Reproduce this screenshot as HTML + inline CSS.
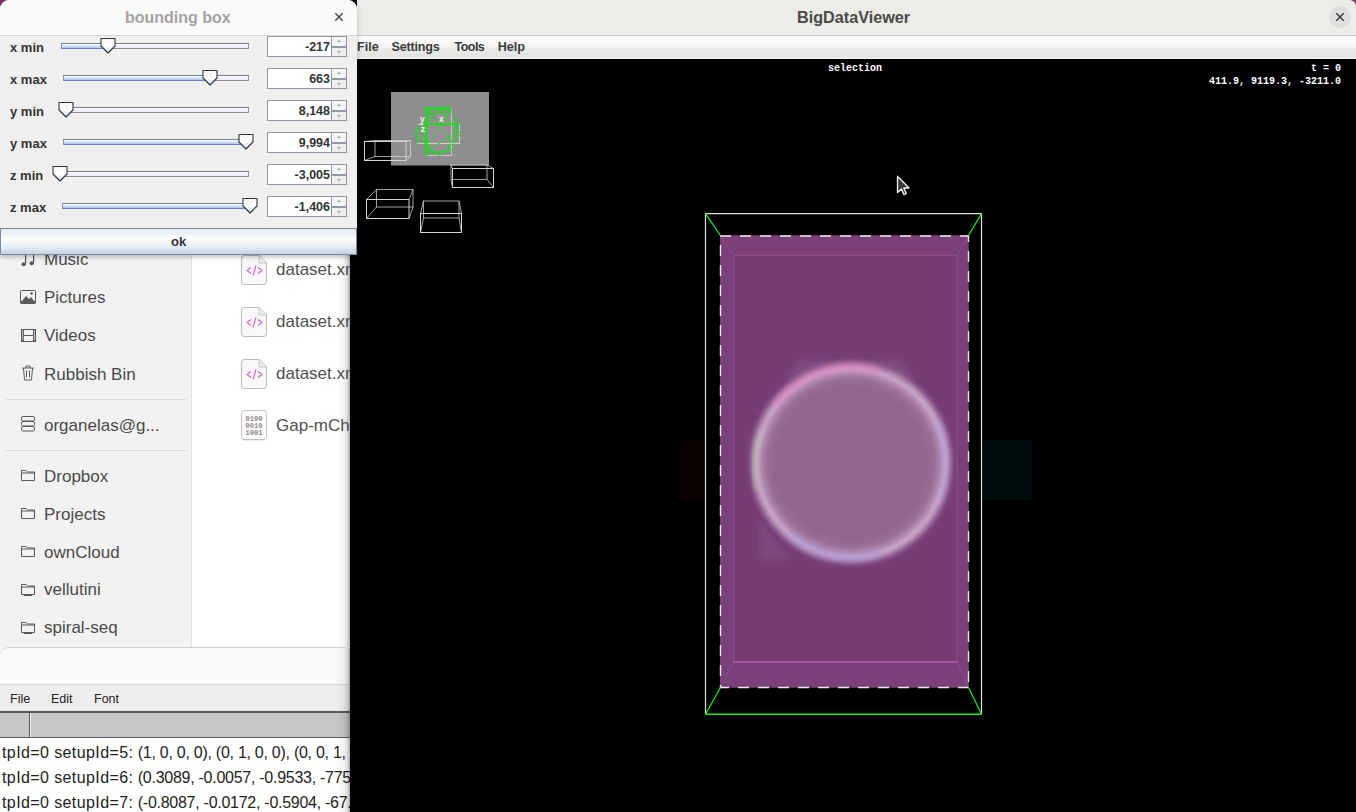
<!DOCTYPE html><html><head><meta charset="utf-8"><style>
*{margin:0;padding:0;box-sizing:border-box}
html,body{width:1356px;height:812px;overflow:hidden;background:#000;font-family:"Liberation Sans",sans-serif}
.a{position:absolute}
svg{position:absolute;overflow:visible}
.si{position:absolute;left:44px;font-size:17px;color:#4a4a4a;white-space:nowrap;line-height:20px}
.fi{position:absolute;left:276px;font-size:17px;color:#505050;white-space:nowrap;line-height:20px}
.mi{position:absolute;font-size:12.6px;font-weight:bold;color:#3b3b3b;line-height:16px;white-space:nowrap}
.mono{font-family:"Liberation Mono",monospace;font-weight:bold;color:#fff;font-size:10px;position:absolute;white-space:nowrap;line-height:12px}
.lab{position:absolute;left:10px;font-size:13px;font-weight:bold;color:#333;white-space:nowrap;line-height:16px}
.fld{position:absolute;left:267px;width:65px;height:21px;background:#fff;border:1px solid #8f9aa6;border-right:none;font-size:12.5px;font-weight:bold;color:#333;text-align:right;padding-right:2px;line-height:20.5px}
.sp{position:absolute;left:331px;width:16px;height:21px;border:1px solid #8f9aa6;background:linear-gradient(#f7f7f7,#ececec)}
.sp i{position:absolute;left:0;top:9px;width:14px;height:2px;background:#8f9aa6}
.sp b{position:absolute;left:5px;width:0;height:0;border-left:2.5px solid transparent;border-right:2.5px solid transparent}
.log{position:absolute;left:2px;font-size:16px;color:#222;white-space:nowrap;line-height:20px}
</style></head><body>
<div class="a" style="left:0;top:0;width:1356px;height:812px;background:#000"></div>
<div class="a" style="left:0;top:0;width:40px;height:40px;background:#7d2c6b"></div>
<div class="a" style="left:1316px;top:0;width:40px;height:40px;background:#7d2c6b"></div>
<div class="a" style="left:0;top:20px;width:350px;height:640px;background:#fff;overflow:hidden"><div class="a" style="left:0;top:-20px;width:350px;height:660px">
<div class="a" style="left:0;top:0;width:192px;height:660px;background:#f2f2f2;border-right:1px solid #e2e2e2"></div>
<div class="a" style="left:336px;top:0;width:14px;height:660px;background:linear-gradient(90deg,rgba(0,0,0,0),rgba(0,0,0,0.03) 45%,rgba(0,0,0,0.09) 70%,rgba(0,0,0,0.2) 88%,rgba(0,0,0,0.35))"></div>
<div class="si" style="top:250.2px">Music</div>
<div class="si" style="top:288.3px">Pictures</div>
<div class="si" style="top:325.8px">Videos</div>
<div class="si" style="top:364.5px">Rubbish Bin</div>
<div class="si" style="top:415.8px">organelas@g...</div>
<div class="si" style="top:466.8px">Dropbox</div>
<div class="si" style="top:504.8px">Projects</div>
<div class="si" style="top:542.5px">ownCloud</div>
<div class="si" style="top:580.2px">vellutini</div>
<div class="si" style="top:618.1px">spiral-seq</div>
<div class="a" style="left:6px;top:399px;width:180px;height:1px;background:#d9d9d9"></div>
<div class="a" style="left:6px;top:450px;width:180px;height:1px;background:#d9d9d9"></div>
<svg style="left:0;top:0" width="60" height="400" viewBox="0 0 60 400"><path d="M25.6 250V263.5M33.6 250V262.5" stroke="#5a5a5a" stroke-width="1.3"/><ellipse cx="23.7" cy="264.2" rx="2.2" ry="2" fill="#5a5a5a"/><ellipse cx="31.7" cy="263.2" rx="2.2" ry="2" fill="#5a5a5a"/></svg>
<svg style="left:20px;top:290px" width="16" height="14" viewBox="0 0 16 14"><rect x="0.5" y="0.5" width="15" height="13" rx="1" fill="none" stroke="#5a5a5a"/><path d="M2 11l4-5 3 3 2-2 3 4z" fill="#5a5a5a"/><circle cx="11.5" cy="3.5" r="1.2" fill="#5a5a5a"/><rect x="0.5" y="11" width="15" height="2.5" fill="#5a5a5a"/></svg>
<svg style="left:21px;top:329px" width="15" height="13" viewBox="0 0 15 13"><rect x="0" y="0" width="15" height="13" fill="#5a5a5a"/><rect x="3" y="1" width="9" height="5" fill="#f2f2f2"/><rect x="3" y="7" width="9" height="5" fill="#f2f2f2"/><g fill="#f2f2f2"><rect x="1" y="1.5" width="1.2" height="1.2"/><rect x="1" y="3.5" width="1.2" height="1.2"/><rect x="1" y="5.5" width="1.2" height="1.2"/><rect x="1" y="7.5" width="1.2" height="1.2"/><rect x="1" y="9.5" width="1.2" height="1.2"/><rect x="12.8" y="1.5" width="1.2" height="1.2"/><rect x="12.8" y="3.5" width="1.2" height="1.2"/><rect x="12.8" y="5.5" width="1.2" height="1.2"/><rect x="12.8" y="7.5" width="1.2" height="1.2"/><rect x="12.8" y="9.5" width="1.2" height="1.2"/></g></svg>
<svg style="left:21px;top:365px" width="14" height="16" viewBox="0 0 14 16"><path d="M1 3h12 M5 3V1h4v2 M2.5 3l1 12h7l1-12 M5.5 5.5v7 M8.5 5.5v7" fill="none" stroke="#5a5a5a"/></svg>
<svg style="left:21px;top:416px" width="14" height="16" viewBox="0 0 14 16"><rect x="0.5" y="0.5" width="13" height="4.5" rx="1.5" fill="none" stroke="#5a5a5a"/><rect x="0.5" y="5.5" width="13" height="4.5" rx="1.5" fill="none" stroke="#5a5a5a"/><rect x="0.5" y="10.5" width="13" height="4.5" rx="1.5" fill="none" stroke="#5a5a5a"/></svg>
<svg style="left:20px;top:467px" width="16" height="16" viewBox="0 0 16 16"><path d="M1.5 3.5h4.5l1.5 1.5h7v8.5h-13z M1.5 6h13" fill="none" stroke="#5a5a5a" stroke-width="1"/></svg>
<svg style="left:20px;top:505px" width="16" height="16" viewBox="0 0 16 16"><path d="M1.5 3.5h4.5l1.5 1.5h7v8.5h-13z M1.5 6h13" fill="none" stroke="#5a5a5a" stroke-width="1"/></svg>
<svg style="left:20px;top:543px" width="16" height="16" viewBox="0 0 16 16"><path d="M1.5 3.5h4.5l1.5 1.5h7v8.5h-13z M1.5 6h13" fill="none" stroke="#5a5a5a" stroke-width="1"/></svg>
<svg style="left:20px;top:581px" width="16" height="16" viewBox="0 0 16 16"><path d="M1.5 3.5h4.5l1.5 1.5h7v8.5h-13z M1.5 6h13" fill="none" stroke="#5a5a5a" stroke-width="1"/><path d="M4 14.5h8" stroke="#5a5a5a" stroke-width="1"/></svg>
<svg style="left:20px;top:619px" width="16" height="16" viewBox="0 0 16 16"><path d="M1.5 3.5h4.5l1.5 1.5h7v8.5h-13z M1.5 6h13" fill="none" stroke="#5a5a5a" stroke-width="1"/><path d="M4 14.5h8" stroke="#5a5a5a" stroke-width="1"/></svg>
<svg style="left:241px;top:255px" width="27" height="30" viewBox="0 0 27 30"><path d="M3.5 0.5h14.5l7.5 7.5v18.5a3 3 0 0 1-3 3h-19a3 3 0 0 1-3-3v-23a3 3 0 0 1 3-3z" fill="#f8f8f8" stroke="#bcbcbc" stroke-width="1.1"/><path d="M18 0.5v7.5h7.5" fill="#ececec" stroke="#c8c8c8" stroke-width="1"/><path d="M10 12.5l-4 3 4 3 M17 12.5l4 3-4 3 M15 10.5l-3 10" fill="none" stroke="#d45ad4" stroke-width="1.1"/></svg>
<div class="fi" style="top:260.2px">dataset.xml</div>
<svg style="left:241px;top:307px" width="27" height="30" viewBox="0 0 27 30"><path d="M3.5 0.5h14.5l7.5 7.5v18.5a3 3 0 0 1-3 3h-19a3 3 0 0 1-3-3v-23a3 3 0 0 1 3-3z" fill="#f8f8f8" stroke="#bcbcbc" stroke-width="1.1"/><path d="M18 0.5v7.5h7.5" fill="#ececec" stroke="#c8c8c8" stroke-width="1"/><path d="M10 12.5l-4 3 4 3 M17 12.5l4 3-4 3 M15 10.5l-3 10" fill="none" stroke="#d45ad4" stroke-width="1.1"/></svg>
<div class="fi" style="top:312.2px">dataset.xml</div>
<svg style="left:241px;top:359px" width="27" height="30" viewBox="0 0 27 30"><path d="M3.5 0.5h14.5l7.5 7.5v18.5a3 3 0 0 1-3 3h-19a3 3 0 0 1-3-3v-23a3 3 0 0 1 3-3z" fill="#f8f8f8" stroke="#bcbcbc" stroke-width="1.1"/><path d="M18 0.5v7.5h7.5" fill="#ececec" stroke="#c8c8c8" stroke-width="1"/><path d="M10 12.5l-4 3 4 3 M17 12.5l4 3-4 3 M15 10.5l-3 10" fill="none" stroke="#d45ad4" stroke-width="1.1"/></svg>
<div class="fi" style="top:364.2px">dataset.xml</div>
<svg style="left:241px;top:410px" width="27" height="31" viewBox="0 0 27 31"><rect x="0.5" y="0.5" width="25" height="29" rx="3" fill="#fafafa" stroke="#c6c6c6"/><path d="M1.5 29.8h23" stroke="#b8b8b8" stroke-width="0.8"/><g font-size="7" fill="#8a8a8a" font-family="Liberation Mono" text-anchor="middle" font-weight="bold"><text x="13" y="11">0100</text><text x="13" y="18">0010</text><text x="13" y="25">1001</text></g></svg>
<div class="fi" style="top:416.2px">Gap-mChe</div>
</div></div>
<div class="a" style="left:0;top:647px;width:350px;height:170px;background:#fafafa;border-top-left-radius:9px;overflow:hidden;border-top:1px solid #cfcfcf">
<div class="a" style="left:0;top:36px;width:350px;height:1px;background:#d6d6d6"></div>
<div class="a" style="left:0;top:37px;width:350px;height:27px;background:#eeeeee"></div>
<div class="a" style="left:10px;top:43px;font-size:12.5px;color:#222;line-height:16px">File</div>
<div class="a" style="left:51px;top:43px;font-size:12.5px;color:#222;line-height:16px">Edit</div>
<div class="a" style="left:94px;top:43px;font-size:12.5px;color:#222;line-height:16px">Font</div>
<div class="a" style="left:0;top:62px;width:350px;height:1px;background:#e4e4e4"></div>
<div class="a" style="left:0;top:63px;width:350px;height:2px;background:#5c5c5c"></div>
<div class="a" style="left:0;top:65px;width:350px;height:24px;background:#c6c6c4"></div>
<div class="a" style="left:29px;top:65px;width:1px;height:24px;background:#555"></div>
<div class="a" style="left:30px;top:65px;width:1px;height:24px;background:#f4f4f4"></div>
<div class="a" style="left:0;top:89px;width:350px;height:1px;background:#5c5c5c"></div>
<div class="a" style="left:0;top:90px;width:350px;height:80px;background:#fff"></div>
<div class="log" style="top:95.1px"><span style="letter-spacing:0.4px">tpId=0 setupId=5:</span> <span style="letter-spacing:-0.27px">(1, 0, 0, 0), (0, 1, 0, 0), (0, 0, 1, 0)</span></div>
<div class="log" style="top:120.0px"><span style="letter-spacing:0.4px">tpId=0 setupId=6:</span> <span style="letter-spacing:-0.27px">(0.3089, -0.0057, -0.9533, -775.2)</span></div>
<div class="log" style="top:144.8px"><span style="letter-spacing:0.4px">tpId=0 setupId=7:</span> <span style="letter-spacing:-0.27px">(-0.8087, -0.0172, -0.5904, -67.2)</span></div>
<div class="a" style="left:336px;top:0;width:14px;height:170px;background:linear-gradient(90deg,rgba(0,0,0,0),rgba(0,0,0,0.03) 45%,rgba(0,0,0,0.09) 70%,rgba(0,0,0,0.2) 88%,rgba(0,0,0,0.35))"></div>
</div>
<div class="a" style="left:357px;top:0;width:999px;height:812px;background:#000;overflow:hidden;border-top-right-radius:6px">
<div class="a" style="left:0;top:0;width:999px;height:35px;background:#ecece9"></div>
<div class="a" style="left:0;top:35px;width:999px;height:1px;background:#cbcbcb"></div>
<div class="a" style="left:0;top:36px;width:999px;height:23px;background:linear-gradient(#fefdfd 0,#fdfcfc 18%,#f3f3f2 45%,#e9e9e8 55%,#e8e8e7 70%,#e3e3e2 90%,#eeeeed 91%,#eeeeed 100%)"></div>
<div class="a" style="left:440px;top:7px;font-size:16.2px;font-weight:bold;color:#4a4a4a;line-height:20px">BigDataViewer</div>
<div class="a" style="left:972px;top:6px;width:22px;height:22px;border-radius:50%;background:#dedede"></div>
<svg style="left:979px;top:13px" width="8" height="8" viewBox="0 0 8 8"><path d="M0.3 0.3L7.7 7.7M7.7 0.3L0.3 7.7" stroke="#333" stroke-width="1.3"/></svg>
<div class="mi" style="left:0px;top:39px;letter-spacing:0px">File</div>
<div class="mi" style="left:34.5px;top:39px;letter-spacing:-0.2px">Settings</div>
<div class="mi" style="left:97.6px;top:39px;letter-spacing:-0.6px">Tools</div>
<div class="mi" style="left:140.7px;top:39px;letter-spacing:0px">Help</div>
</div>
<div class="mono" style="left:828px;top:63px">selection</div>
<div class="mono" style="left:1311px;top:63px">t = 0</div>
<div class="mono" style="left:1209px;top:75.5px">411.9, 9119.3, -3211.0</div>
<svg style="left:0;top:0" width="1356" height="812" viewBox="0 0 1356 812">
<defs>
<radialGradient id="cellin" cx="0.5" cy="0.5" r="0.5">
 <stop offset="0" stop-color="#95688f"/><stop offset="0.8" stop-color="#93668f"/><stop offset="1" stop-color="#a07aa0"/>
</radialGradient>
<filter id="blur1" x="-20%" y="-20%" width="140%" height="140%"><feGaussianBlur stdDeviation="1.5"/></filter>
<filter id="blur2" x="-20%" y="-20%" width="140%" height="140%"><feGaussianBlur stdDeviation="2.5"/></filter>
<filter id="blur3" x="-50%" y="-50%" width="200%" height="200%"><feGaussianBlur stdDeviation="5"/></filter>
</defs>
<rect x="391" y="92" width="98" height="73.5" fill="#8e8e8e"/>
<ellipse cx="440" cy="133" rx="18" ry="20" fill="#b090b0" opacity="0.35"/>
<g fill="none" stroke="#16e016" stroke-width="1.1">
<path d="M451.5 108V155.5H427" stroke="#d6d6d6" stroke-opacity="0.8"/>
<rect x="417.5" y="124.5" width="42" height="19" stroke="#d0e8d0" stroke-opacity="0.8"/>
<path d="M417.5 124.5V143.5" stroke-width="1.2"/>
<polygon points="440,110 461,134 440,156 415,134" stroke-width="1.3" stroke-dasharray="3 1.5"/>
<polygon points="430,113 452,112 458,130 452,150 430,153 423,133" stroke-width="1.2" stroke-dasharray="2.5 1.5"/>
<path d="M428 110L452 142 M450 110L428 145 M430 150L458 130 M432 152h16 M458 118L448 152" stroke-width="1.1" stroke-dasharray="3 1.5"/>
<path d="M425.5 108.5h26" stroke-width="2.4"/>
<path d="M426.5 108v47.5" stroke-width="2.4"/>
<path d="M426 124.3h33.5" stroke-width="1.8"/>
</g>
<text x="420" y="122" font-size="8.5" font-weight="bold" fill="#f4f4f4" font-family="Liberation Sans">y</text>
<text x="439" y="122.3" font-size="8.5" font-weight="bold" fill="#f4f4f4" font-family="Liberation Sans">x</text>
<text x="420.8" y="132" font-size="8.5" font-weight="bold" fill="#f4f4f4" font-family="Liberation Sans">z</text>
<g fill="none" stroke="#d4d4d4" stroke-width="1">
<rect x="364.5" y="141.5" width="41.5" height="19.0"/><rect x="375" y="140.5" width="35.5" height="16.0" stroke-opacity="0.75"/><path d="M364.5 141.5L375 140.5M406 141.5L410.5 140.5M364.5 160.5L375 156.5M406 160.5L410.5 156.5" stroke-opacity="0.75"/>
<rect x="366.5" y="199.5" width="42.5" height="19.0"/><rect x="376.5" y="189.5" width="36.5" height="17.5" stroke-opacity="0.75"/><path d="M366.5 199.5L376.5 189.5M409 199.5L413 189.5M366.5 218.5L376.5 207M409 218.5L413 207" stroke-opacity="0.75"/>
<rect x="452.5" y="168.5" width="41.0" height="19.0"/><rect x="451" y="165" width="36" height="14.5" stroke-opacity="0.75"/><path d="M452.5 168.5L451 165M493.5 168.5L487 165M452.5 187.5L451 179.5M493.5 187.5L487 179.5" stroke-opacity="0.75"/>
<rect x="420.5" y="213.5" width="41.0" height="19.0"/><rect x="423.5" y="201" width="35.5" height="17" stroke-opacity="0.75"/><path d="M420.5 213.5L423.5 201M461.5 213.5L459 201M420.5 232.5L423.5 218M461.5 232.5L459 218" stroke-opacity="0.75"/>
</g>
<g filter="url(#blur3)">
<rect x="680" y="440" width="26" height="60" fill="#070305"/>
<rect x="982" y="440" width="50" height="60" fill="#03080b"/>
</g>
<rect x="720" y="235.5" width="248.5" height="452" fill="#763d75"/>
<polygon points="720,235.5 968.5,235.5 957,255.5 733.5,255.5" fill="#7c3f78"/>
<polygon points="720,235.5 733.5,255.5 733.5,662 720,687.5" fill="#7a4079"/>
<polygon points="968.5,235.5 957,255.5 957,662 968.5,687.5" fill="#7a4079"/>
<polygon points="720,687.5 733.5,662 957,662 968.5,687.5" fill="#7a4079"/>
<path d="M800 360 L900 360 L915 380 L785 380z" fill="#8a5a88" opacity="0.5" filter="url(#blur2)"/>
<path d="M760 520 L790 560 L760 560z" fill="#8a5a88" opacity="0.4" filter="url(#blur2)"/>
<circle cx="851" cy="463" r="95" fill="url(#cellin)"/>
<circle cx="851" cy="463" r="94" fill="none" stroke="#b48ab2" stroke-width="13" filter="url(#blur2)"/>
<circle cx="851" cy="463" r="94" fill="none" stroke="#d4b6d2" stroke-width="5" stroke-dasharray="2.5 2" filter="url(#blur1)"/>
<path d="M775 405 A94 94 0 0 1 880 372" fill="none" stroke="#f070c0" stroke-width="6" opacity="0.45" filter="url(#blur2)"/>
<path d="M757 490 A94 94 0 0 1 762 430" fill="none" stroke="#b0e0a0" stroke-width="5" opacity="0.35" filter="url(#blur2)"/>
<path d="M790 535 A94 94 0 0 0 880 553" fill="none" stroke="#9090ff" stroke-width="6" opacity="0.35" filter="url(#blur2)"/>
<path d="M935 420 A94 94 0 0 1 940 500" fill="none" stroke="#a0a0ff" stroke-width="5" opacity="0.3" filter="url(#blur2)"/>
<g fill="none" stroke="#a45aa6" stroke-width="1">
<path d="M733.5 662V255.5H957V662" stroke-opacity="0.55"/>
<path d="M720 235.5L733.5 255.5M968.5 235.5L957 255.5M720 687.5L733.5 662M968.5 687.5L957 662" stroke-opacity="0.5"/>
</g>
<path d="M733.5 662H957" stroke="#b858bc" stroke-width="1.3"/>
<path d="M720 236H968.5" stroke="#eee4ee" stroke-width="1.4" stroke-dasharray="11 9"/>
<path d="M720.5 236V687.5" stroke="#eee4ee" stroke-width="1.4" stroke-dasharray="11 9" stroke-dashoffset="11"/>
<path d="M968.5 236V687.5" stroke="#eee4ee" stroke-width="1.4" stroke-dasharray="11 9" stroke-dashoffset="5"/>
<path d="M720 687.5H968.5" stroke="#eee4ee" stroke-width="1.4" stroke-dasharray="11 9" stroke-dashoffset="2"/>
<g fill="none" stroke-width="1.2">
<path d="M705.5 714.3V213.6H981.5V714.3" stroke="#e0e0e0"/>
<path d="M705.5 714.3H981.5" stroke="#1ef01e" stroke-width="1.5"/>
<path d="M705.5 213.6L720.5 235.5M981.5 213.6L968.5 235.5M705.5 714.3L720.5 687.5M981.5 714.3L968.5 687.5" stroke="#1ef01e"/>
</g>
<path d="M897.5 176.3L897.5 192.5L901.3 189L904 194.6L906.3 193.5L903.8 188L909 188z" fill="#3a3a3a" stroke="#f4f4f4" stroke-width="1.3" stroke-linejoin="round"/>
</svg>
<div class="a" style="left:0;top:0;width:357px;height:255px;box-shadow:0 2px 5px rgba(0,0,0,0.25);border-top-left-radius:9px;border-top-right-radius:9px"></div>
<div class="a" style="left:0;top:0;width:357px;height:255px;background:#efefef;border-top-left-radius:9px;border-top-right-radius:9px;overflow:hidden">
<div class="a" style="left:0;top:0;width:357px;height:35px;background:#fafaf9"></div>
<div class="a" style="left:0;top:34px;width:357px;height:1px;background:#ffffff"></div>
<div class="a" style="left:0;top:35px;width:357px;height:1px;background:#d9d9d9"></div>
<div class="a" style="left:125px;top:8px;font-size:16px;font-weight:bold;color:#a3a3a3;line-height:20px">bounding box</div>
<svg style="left:335px;top:13px" width="8" height="8" viewBox="0 0 8 8"><path d="M0.3 0.3L7.7 7.7M7.7 0.3L0.3 7.7" stroke="#444" stroke-width="1.4"/></svg>
<div class="lab" style="top:39.5px">x min</div>
<div class="a" style="left:61px;top:43px;width:187.5px;height:6px;border:1px solid #8c929c;border-top-color:#7c838f;background:linear-gradient(#fbfbfd,#eceef8)"></div>
<div class="a" style="left:61px;top:43px;width:46.5px;height:6px;border-top:1px solid #7c838f;border-left:1px solid #8c929c;border-bottom:1px solid #6a86cc;background:linear-gradient(#ffffff,#d9e6f6 50%,#a8c2ea)"></div>
<svg style="left:99.5px;top:36.8px" width="16" height="17" viewBox="0 0 16 17"><defs><linearGradient id="tg0" x1="0" y1="0" x2="0" y2="1"><stop offset="0" stop-color="#f4f4f6"/><stop offset="0.5" stop-color="#ffffff"/><stop offset="1" stop-color="#c8daf2"/></linearGradient></defs><path d="M1 1.5h14v7.5l-7 7l-7-7z" fill="url(#tg0)" stroke="#333" stroke-width="1.1" stroke-linejoin="round"/></svg>
<div class="fld" style="top:36px">-217</div>
<div class="sp" style="top:36px"><i></i><b style="top:3px;border-bottom:2.5px solid #9a9a9a"></b><b style="top:13.5px;border-top:2.5px solid #9a9a9a"></b></div>
<div class="lab" style="top:71.5px">x max</div>
<div class="a" style="left:63px;top:75px;width:185.5px;height:6px;border:1px solid #8c929c;border-top-color:#7c838f;background:linear-gradient(#fbfbfd,#eceef8)"></div>
<div class="a" style="left:63px;top:75px;width:146.5px;height:6px;border-top:1px solid #7c838f;border-left:1px solid #8c929c;border-bottom:1px solid #6a86cc;background:linear-gradient(#ffffff,#d9e6f6 50%,#a8c2ea)"></div>
<svg style="left:201.5px;top:68.8px" width="16" height="17" viewBox="0 0 16 17"><defs><linearGradient id="tg1" x1="0" y1="0" x2="0" y2="1"><stop offset="0" stop-color="#f4f4f6"/><stop offset="0.5" stop-color="#ffffff"/><stop offset="1" stop-color="#c8daf2"/></linearGradient></defs><path d="M1 1.5h14v7.5l-7 7l-7-7z" fill="url(#tg1)" stroke="#333" stroke-width="1.1" stroke-linejoin="round"/></svg>
<div class="fld" style="top:68px">663</div>
<div class="sp" style="top:68px"><i></i><b style="top:3px;border-bottom:2.5px solid #9a9a9a"></b><b style="top:13.5px;border-top:2.5px solid #9a9a9a"></b></div>
<div class="lab" style="top:103.5px">y min</div>
<div class="a" style="left:62px;top:107px;width:186.5px;height:6px;border:1px solid #8c929c;border-top-color:#7c838f;background:linear-gradient(#fbfbfd,#eceef8)"></div>
<div class="a" style="left:62px;top:107px;width:4.4px;height:6px;border-top:1px solid #7c838f;border-left:1px solid #8c929c;border-bottom:1px solid #6a86cc;background:linear-gradient(#ffffff,#d9e6f6 50%,#a8c2ea)"></div>
<svg style="left:58.4px;top:100.8px" width="16" height="17" viewBox="0 0 16 17"><defs><linearGradient id="tg2" x1="0" y1="0" x2="0" y2="1"><stop offset="0" stop-color="#f4f4f6"/><stop offset="0.5" stop-color="#ffffff"/><stop offset="1" stop-color="#c8daf2"/></linearGradient></defs><path d="M1 1.5h14v7.5l-7 7l-7-7z" fill="url(#tg2)" stroke="#333" stroke-width="1.1" stroke-linejoin="round"/></svg>
<div class="fld" style="top:100px">8,148</div>
<div class="sp" style="top:100px"><i></i><b style="top:3px;border-bottom:2.5px solid #9a9a9a"></b><b style="top:13.5px;border-top:2.5px solid #9a9a9a"></b></div>
<div class="lab" style="top:135.5px">y max</div>
<div class="a" style="left:63px;top:139px;width:185.5px;height:6px;border:1px solid #8c929c;border-top-color:#7c838f;background:linear-gradient(#fbfbfd,#eceef8)"></div>
<div class="a" style="left:63px;top:139px;width:182.6px;height:6px;border-top:1px solid #7c838f;border-left:1px solid #8c929c;border-bottom:1px solid #6a86cc;background:linear-gradient(#ffffff,#d9e6f6 50%,#a8c2ea)"></div>
<svg style="left:237.6px;top:132.8px" width="16" height="17" viewBox="0 0 16 17"><defs><linearGradient id="tg3" x1="0" y1="0" x2="0" y2="1"><stop offset="0" stop-color="#f4f4f6"/><stop offset="0.5" stop-color="#ffffff"/><stop offset="1" stop-color="#c8daf2"/></linearGradient></defs><path d="M1 1.5h14v7.5l-7 7l-7-7z" fill="url(#tg3)" stroke="#333" stroke-width="1.1" stroke-linejoin="round"/></svg>
<div class="fld" style="top:132px">9,994</div>
<div class="sp" style="top:132px"><i></i><b style="top:3px;border-bottom:2.5px solid #9a9a9a"></b><b style="top:13.5px;border-top:2.5px solid #9a9a9a"></b></div>
<div class="lab" style="top:167.5px">z min</div>
<div class="a" style="left:61px;top:171px;width:187.5px;height:6px;border:1px solid #8c929c;border-top-color:#7c838f;background:linear-gradient(#fbfbfd,#eceef8)"></div>
<svg style="left:52.4px;top:164.8px" width="16" height="17" viewBox="0 0 16 17"><defs><linearGradient id="tg4" x1="0" y1="0" x2="0" y2="1"><stop offset="0" stop-color="#f4f4f6"/><stop offset="0.5" stop-color="#ffffff"/><stop offset="1" stop-color="#c8daf2"/></linearGradient></defs><path d="M1 1.5h14v7.5l-7 7l-7-7z" fill="url(#tg4)" stroke="#333" stroke-width="1.1" stroke-linejoin="round"/></svg>
<div class="fld" style="top:164px">-3,005</div>
<div class="sp" style="top:164px"><i></i><b style="top:3px;border-bottom:2.5px solid #9a9a9a"></b><b style="top:13.5px;border-top:2.5px solid #9a9a9a"></b></div>
<div class="lab" style="top:199.5px">z max</div>
<div class="a" style="left:62px;top:203px;width:187.6px;height:6px;border:1px solid #8c929c;border-top-color:#7c838f;background:linear-gradient(#fbfbfd,#eceef8)"></div>
<div class="a" style="left:62px;top:203px;width:187.6px;height:6px;border-top:1px solid #7c838f;border-left:1px solid #8c929c;border-bottom:1px solid #6a86cc;background:linear-gradient(#ffffff,#d9e6f6 50%,#a8c2ea)"></div>
<svg style="left:241.6px;top:196.8px" width="16" height="17" viewBox="0 0 16 17"><defs><linearGradient id="tg5" x1="0" y1="0" x2="0" y2="1"><stop offset="0" stop-color="#f4f4f6"/><stop offset="0.5" stop-color="#ffffff"/><stop offset="1" stop-color="#c8daf2"/></linearGradient></defs><path d="M1 1.5h14v7.5l-7 7l-7-7z" fill="url(#tg5)" stroke="#333" stroke-width="1.1" stroke-linejoin="round"/></svg>
<div class="fld" style="top:196px">-1,406</div>
<div class="sp" style="top:196px"><i></i><b style="top:3px;border-bottom:2.5px solid #9a9a9a"></b><b style="top:13.5px;border-top:2.5px solid #9a9a9a"></b></div>
<div class="a" style="left:0;top:228px;width:357px;height:27px;border:1px solid #7a8a9c;background:linear-gradient(#dfe8f0,#ffffff 40%,#e6eef5 70%,#c4d3e2)"></div>
<div class="a" style="left:171px;top:233.5px;font-size:13px;font-weight:bold;color:#333;line-height:16px">ok</div>
</div>
</body></html>
